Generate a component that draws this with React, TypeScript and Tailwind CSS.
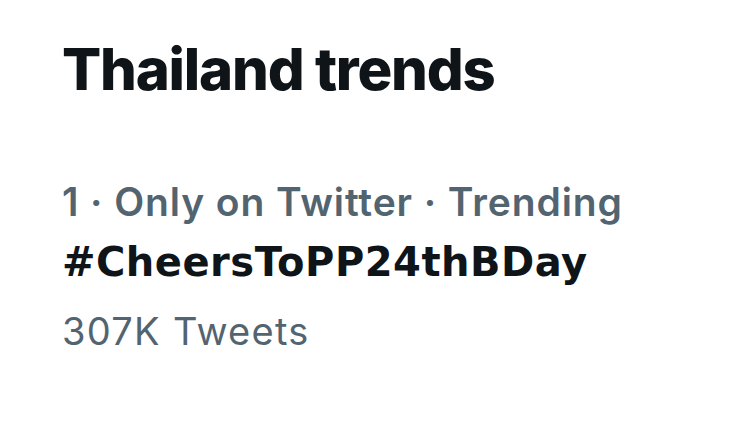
export default function App() {
  return (
    <div className="w-[756px] h-[427px] bg-white overflow-hidden" style={{ fontFamily: "Inter, 'Noto Sans', sans-serif" }}>
      <div className="pl-[62px] pt-[37px]">
        <div className="text-[58px] leading-[64px] font-extrabold text-[#0f1419] tracking-[-1.2px]">Thailand trends</div>
        <div className="mt-[77px] text-[39px] leading-[48px] font-semibold text-[#536471] tracking-[0.9px]">1 · Only on Twitter · Trending</div>
        <div className="mt-[12px] text-[40px] leading-[48px] font-bold text-[#0f1419] tracking-[0.5px] font-['DejaVu_Sans',sans-serif]">#CheersToPP24thBDay</div>
        <div className="mt-[21px] text-[38px] leading-[48px] font-normal text-[#536471] tracking-[1.3px]">307K Tweets</div>
      </div>
    </div>
  );
}
